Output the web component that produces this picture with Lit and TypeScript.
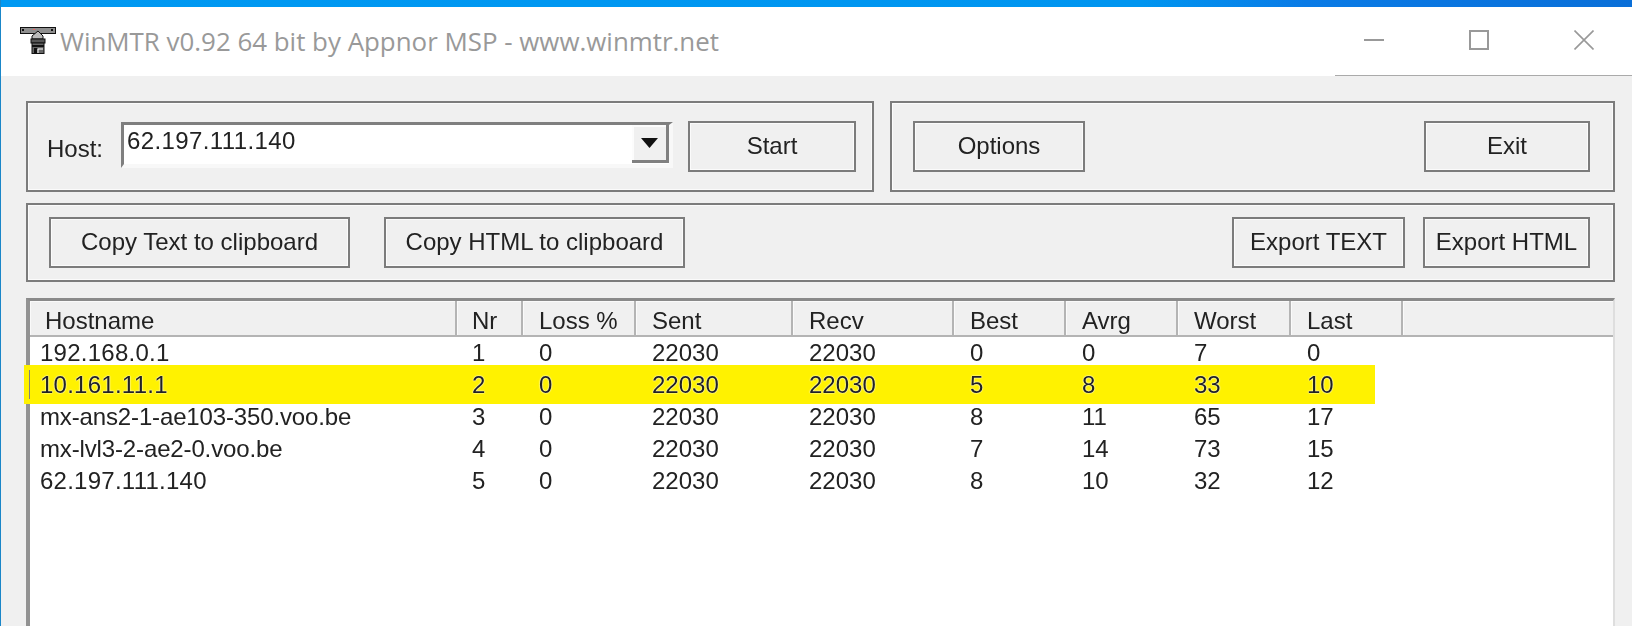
import { LitElement, html, css, svg } from "lit";
import { customElement } from "lit/decorators.js";

const COLS = ["Hostname", "Nr", "Loss %", "Sent", "Recv", "Best", "Avrg", "Worst", "Last"];
const ROWS = [
  ["192.168.0.1", "1", "0", "22030", "22030", "0", "0", "7", "0"],
  ["10.161.11.1", "2", "0", "22030", "22030", "5", "8", "33", "10"],
  ["mx-ans2-1-ae103-350.voo.be", "3", "0", "22030", "22030", "8", "11", "65", "17"],
  ["mx-lvl3-2-ae2-0.voo.be", "4", "0", "22030", "22030", "7", "14", "73", "15"],
  ["62.197.111.140", "5", "0", "22030", "22030", "8", "10", "32", "12"],
];

@customElement("app-root")
export class AppRoot extends LitElement {
  static styles = css`
    :host {
      display: block;
      height: 626px;
      overflow: hidden;
      box-sizing: border-box;
      border-left: 1px solid #1a86c8;
      font-family: "Liberation Sans", Arial, sans-serif;
      font-size: 24px;
      color: #222;
      background: #f0f0f0;
    }
    * { box-sizing: border-box; }
    .root { display: flex; flex-direction: column; height: 626px; }
    .accent {
      height: 7px;
      flex: none;
      background: linear-gradient(90deg, #0099f2 0%, #0095f0 70%, #0a7be6 80%, #0a6fd8 100%);
    }
    .titlebar {
      height: 69px;
      flex: none;
      background: #fff;
      display: flex;
      align-items: center;
      padding-left: 19px;
      position: relative;
    }
    .titlebar::after {
      content: "";
      position: absolute;
      left: 1334px;
      right: 0;
      bottom: 0;
      height: 1px;
      background: #aaa;
    }
    .appicon { width: 36px; height: 28px; flex: none; margin: -1px 4px 0 0; display: block; }
    .title {
      font-family: "Open Sans", "Noto Sans", sans-serif;
      font-size: 25.9px;
      color: #999;
      white-space: nowrap;
      margin-top: -1px;
      flex: 1;
    }
    .winbtns { display: flex; align-items: center; padding-right: 38px; gap: 85px; margin-top: -3px; }
    .winbtns svg { display: block; width: 20px; height: 20px; }
    .content {
      flex: 1;
      display: flex;
      flex-direction: column;
      padding: 25px 17px 0 25px;
      min-height: 0;
      filter: blur(0.4px);
    }
    .top { display: flex; gap: 16px; height: 91px; flex: none; }
    .group {
      border: 2px solid #7c7c7c;
      box-shadow: inset 0 0 0 1px #fbfbfb;
      display: flex;
      align-items: center;
    }
    .g-host { width: 848px; padding-left: 19px; }
    .g-opts { flex: 1; justify-content: space-between; padding: 0 23px 0 21px; }
    .g-copy { height: 79px; margin-top: 11px; padding: 0 23px 0 21px; flex: none; }
    .label { width: 74px; margin-top: 4px; }
    .combo {
      width: 552px;
      height: 46px;
      margin-top: -3px;
      border-top: 3px solid #7f7f7f;
      border-left: 3px solid #7f7f7f;
      border-right: 4px solid #f8f8f8;
      border-bottom: 4px solid #f8f8f8;
      background: #fff;
      display: flex;
      justify-content: space-between;
      padding-left: 3px;
      margin-right: 15px;
      line-height: 32px;
      letter-spacing: 0.4px;
    }
    .drop {
      width: 37px;
      height: 38px;
      background: #f0f0f0;
      border-right: 3px solid #808080;
      border-bottom: 3px solid #808080;
      box-shadow: inset 2px 2px 0 #fcfcfc;
      display: flex;
      align-items: center;
      justify-content: center;
    }
    .drop svg { display: block; width: 17px; height: 10px; }
    .btn {
      height: 51px;
      border: 2px solid #7c7c7c;
      background: #f0f0f0;
      box-shadow: inset 0 0 0 1px #fbfbfb;
      font: inherit;
      color: inherit;
      padding: 0 0 2px;
      white-space: nowrap;
    }
    .w-start { width: 168px; }
    .w-options { width: 172px; }
    .w-exit { width: 166px; }
    .w-copy { width: 301px; }
    .w-etext { width: 173px; }
    .w-ehtml { width: 167px; }
    .copy-left { display: flex; gap: 34px; }
    .spacer { flex: 1; }
    .export { display: flex; gap: 18px; }
    .list {
      flex: 1;
      margin-top: 16px;
      min-height: 0;
      background: #fff;
      border-top: 3px solid #8a8a8a;
      border-left: 4px solid #929292;
      border-right: 2px solid #dedede;
    }
    .cols {
      display: grid;
      grid-template-columns: 427px 66px 113px 157px 161px 112px 112px 113px 112px 1fr;
    }
    .head { height: 36px; background: #f0f0f0; }
    .hcell {
      border-right: 2px solid #b4b4b4;
      border-bottom: 2px solid #b4b4b4;
      box-shadow: inset 1px 1px 0 #fafafa;
      padding: 6px 0 0 16px;
      line-height: 27px;
      white-space: nowrap;
    }
    .hcell.first { padding-left: 15px; }
    .hcell.nr { padding-left: 15px; }
    .hcell.end { border-right: 0; }
    .row {
      width: 1345px;
      height: 32px;
      line-height: 32px;
      white-space: nowrap;
    }
    .cell { padding-left: 16px; }
    .cell.first { padding-left: 10px; }
    .cell.nr { padding-left: 15px; }
    .cell.ip { letter-spacing: 0.25px; }
    .cell.name { letter-spacing: -0.14px; }
    .row.hit {
      position: relative;
      width: 1351px;
      height: 39px;
      margin: -4px 0 -3px -6px;
      padding-left: 6px;
      line-height: 39px;
      background: #fff200;
      text-shadow: 0 0 1.5px #fff, 0 0 1.5px #fff;
    }
    .row.hit::before {
      content: "";
      position: absolute;
      left: 5px;
      top: 5px;
      bottom: 5px;
      width: 1px;
      background: #808080;
    }
  `;

  private appIcon() {
    return svg`<svg class="appicon" viewBox="0 1 36 28" aria-hidden="true">
      <rect x="0.5" y="1.5" width="35" height="6" fill="#8f8f8f" stroke="#111" stroke-width="1"/>
      <rect x="2" y="3" width="2" height="2" fill="#111"/>
      <rect x="31" y="3" width="2" height="2" fill="#111"/>
      <rect x="13" y="3" width="2" height="1" fill="#e66"/>
      <path d="M18 5l5 5v3H12v-3z" fill="#bbb" stroke="#111" stroke-width="1"/>
      <rect x="11" y="13" width="14" height="4" fill="#555" stroke="#111" stroke-width="1"/>
      <rect x="12" y="17" width="12" height="10.5" fill="#666" stroke="#111" stroke-width="1"/>
      <rect x="12" y="19" width="12" height="2" fill="#111"/>
      <path d="M18 27v-4h5" fill="none" stroke="#fff" stroke-width="1"/>
      <rect x="14" y="22" width="3" height="5" fill="#111"/>
    </svg>`;
  }

  private winButtons() {
    return html`<div class="winbtns">
      <svg viewBox="0 0 20 20" aria-hidden="true"><path d="M0 10h20" stroke="#999" stroke-width="2" fill="none"/></svg>
      <svg viewBox="0 0 20 20" aria-hidden="true"><rect x="1" y="1" width="18" height="18" stroke="#999" stroke-width="2" fill="none"/></svg>
      <svg viewBox="0 0 20 20" aria-hidden="true"><path d="M.5.5l19 19M19.5.5l-19 19" stroke="#999" stroke-width="1.6" fill="none"/></svg>
    </div>`;
  }

  private cellClass(c: string, i: number) {
    if (i === 1) return "nr";
    if (i !== 0) return "";
    return /^[\d.]+$/.test(c) ? "first ip" : "first name";
  }

  render() {
    return html`<div class="root">
      <div class="accent"></div>
      <div class="titlebar">
        ${this.appIcon()}
        <div class="title">WinMTR v0.92 64 bit by Appnor MSP - www.winmtr.net</div>
        ${this.winButtons()}
      </div>
      <div class="content">
        <div class="top">
          <div class="group g-host">
            <span class="label">Host:</span>
            <div class="combo">
              <span>62.197.111.140</span>
              <div class="drop">
                <svg viewBox="0 0 17 10" aria-hidden="true"><path d="M0 0h17L8.5 10z" fill="#111"/></svg>
              </div>
            </div>
            <button class="btn w-start">Start</button>
          </div>
          <div class="group g-opts">
            <button class="btn w-options">Options</button>
            <button class="btn w-exit">Exit</button>
          </div>
        </div>
        <div class="group g-copy">
          <div class="copy-left">
            <button class="btn w-copy">Copy Text to clipboard</button>
            <button class="btn w-copy">Copy HTML to clipboard</button>
          </div>
          <div class="spacer"></div>
          <div class="export">
            <button class="btn w-etext">Export TEXT</button>
            <button class="btn w-ehtml">Export HTML</button>
          </div>
        </div>
        <div class="list">
          <div class="cols head">
            ${COLS.map((c, i) => html`<div class="hcell ${i === 0 ? "first" : i === 1 ? "nr" : ""}">${c}</div>`)}
            <div class="hcell end"></div>
          </div>
          ${ROWS.map(
            (r, ri) => html`<div class="cols row ${ri === 1 ? "hit" : ""}">
              ${r.map((c, i) => html`<div class="cell ${this.cellClass(c, i)}">${c}</div>`)}
            </div>`
          )}
        </div>
      </div>
    </div>`;
  }
}
